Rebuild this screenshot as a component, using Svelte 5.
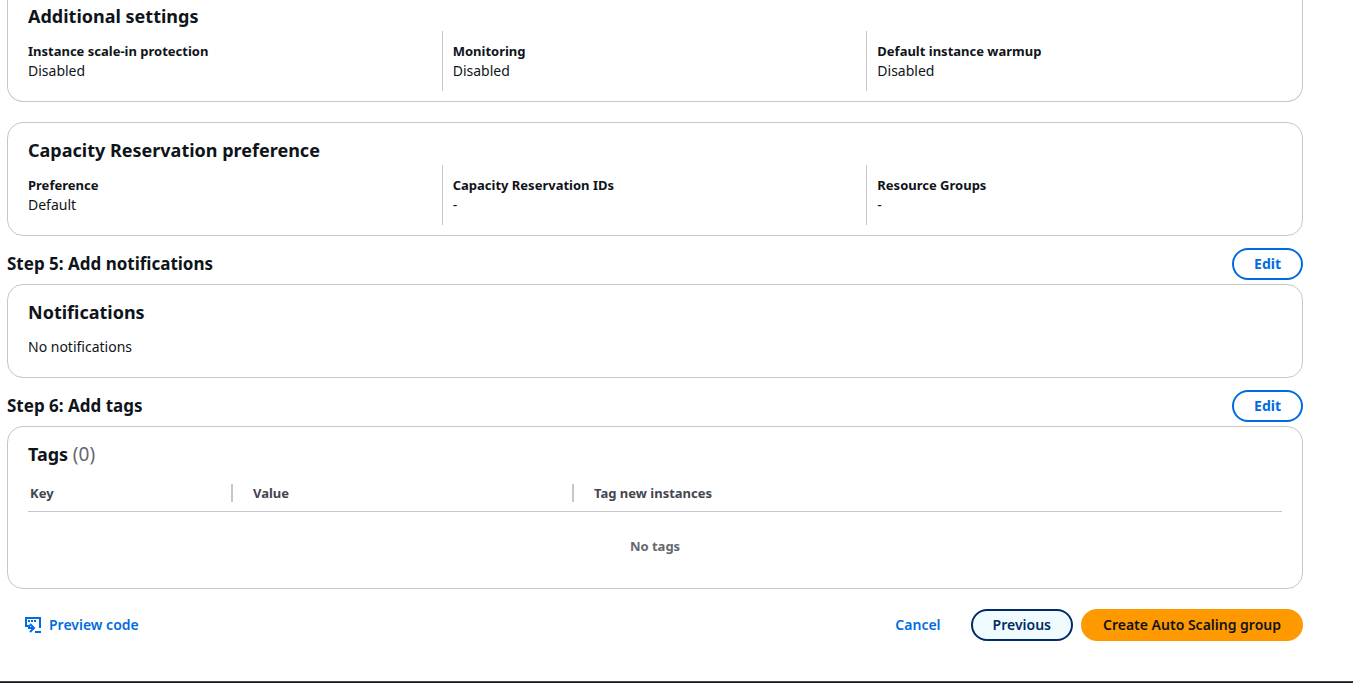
<script>
  const settings = [
    { label: 'Instance scale-in protection', value: 'Disabled' },
    { label: 'Monitoring', value: 'Disabled' },
    { label: 'Default instance warmup', value: 'Disabled' },
  ];
  const capacity = [
    { label: 'Preference', value: 'Default' },
    { label: 'Capacity Reservation IDs', value: '-' },
    { label: 'Resource Groups', value: '-' },
  ];
</script>

{#snippet pairs(items)}
  <dl class="columns">
    {#each items as item}
      <div class="pair">
        <dt>{item.label}</dt>
        <dd>{item.value}</dd>
      </div>
    {/each}
  </dl>
{/snippet}

{#snippet step(title)}
  <header class="step">
    <h2>{title}</h2>
    <button type="button" class="btn edit">Edit</button>
  </header>
{/snippet}

<div class="page">
  <main>
    <section class="card continued">
      <h3>Additional settings</h3>
      {@render pairs(settings)}
    </section>

    <section class="card spaced">
      <h3>Capacity Reservation preference</h3>
      {@render pairs(capacity)}
    </section>

    {@render step('Step 5: Add notifications')}
    <section class="card">
      <h3>Notifications</h3>
      <p class="note">No notifications</p>
    </section>

    {@render step('Step 6: Add tags')}
    <section class="card">
      <h3>Tags <span class="counter">(0)</span></h3>
      <table>
        <colgroup><col class="key" /><col class="value" /><col /></colgroup>
        <thead>
          <tr>
            <th scope="col"><span>Key</span></th>
            <th scope="col"><span>Value</span></th>
            <th scope="col"><span>Tag new instances</span></th>
          </tr>
        </thead>
        <tbody>
          <tr><td colspan="3">No tags</td></tr>
        </tbody>
      </table>
    </section>

    <div class="actions">
      <button type="button" class="btn link preview">
        <svg width="16" height="16" viewBox="0 0 16 16" fill="none" stroke="currentColor" stroke-width="2" aria-hidden="true">
          <path d="M15 11V1H1v8h3v2h4" />
          <path d="M5 7l4 4-4 4" />
          <path d="M10 15h6M3 4h2M6 4h2M9 4h2" />
        </svg>
        Preview code
      </button>
      <div class="right">
        <button type="button" class="btn link">Cancel</button>
        <button type="button" class="btn previous">Previous</button>
        <button type="button" class="btn primary">Create Auto Scaling group</button>
      </div>
    </div>
  </main>
  <div class="bar"></div>
</div>

<style>
  :global(body) {
    margin: 0;
    background: #fff;
  }
  .page {
    box-sizing: border-box;
    min-height: 100vh;
    display: flex;
    flex-direction: column;
    justify-content: space-between;
    font-family: 'Noto Sans', 'Open Sans', sans-serif;
    font-size: 14px;
    line-height: 20px;
    color: #0f141a;
  }
  main {
    padding: 0 50px 0 7px;
  }
  .card {
    border: 1px solid #c6c6cd;
    border-radius: 16px;
    padding: 15px 20px 10px;
  }
  .continued {
    border-top: 0;
    border-radius: 0 0 16px 16px;
    padding-top: 4px;
  }
  .spaced {
    margin-top: 20px;
  }
  h2,
  h3 {
    margin: 0;
    font-size: 17px;
    line-height: 24px;
    font-weight: 700;
  }
  h3 {
    font-size: 18px;
  }
  .counter {
    font-size: 19px;
    font-weight: 400;
    line-height: 20px;
    color: #656871;
  }
  .columns {
    display: grid;
    grid-template-columns: repeat(3, 1fr);
    gap: 20px;
    margin: 3px 0 0;
  }
  .pair {
    padding: 10px 0;
  }
  .pair + .pair {
    margin-left: -11px;
    padding-left: 10px;
    border-left: 1px solid #c6c6cd;
  }
  dt {
    font-size: 13px;
    font-weight: 700;
  }
  dd {
    margin: 0;
  }
  .step {
    display: flex;
    align-items: center;
    justify-content: space-between;
    padding: 12px 0 4px;
  }
  .note {
    margin: 13px 0 10px;
  }
  table {
    width: 100%;
    margin-top: 9px;
    border-collapse: separate;
    border-spacing: 0;
    table-layout: fixed;
    font-size: 13px;
  }
  .key {
    width: 205px;
  }
  .value {
    width: 341px;
  }
  th {
    padding: 9px 0 9px 20px;
    border-bottom: 1px solid #c6c6cd;
    text-align: left;
    line-height: 18px;
    color: #424650;
  }
  th:first-child {
    padding-left: 2px;
  }
  th span {
    display: block;
  }
  th:not(:last-child) span {
    border-right: 2px solid #c6c6cd;
  }
  td {
    padding: 24px 0 22px;
    text-align: center;
    font-weight: 700;
    color: #656871;
  }
  .actions,
  .right {
    display: flex;
    align-items: center;
    justify-content: space-between;
    gap: 8px;
  }
  .actions {
    margin: 20px 0;
  }
  .btn {
    box-sizing: border-box;
    min-height: 32px;
    padding: 4px 20px;
    border: 2px solid #006ce0;
    border-radius: 20px;
    background: #fff;
    color: #006ce0;
    font: inherit;
    font-weight: 600;
    cursor: pointer;
  }
  .edit {
    font-weight: 700;
  }
  .link {
    border-color: transparent;
    background: none;
  }
  .preview {
    display: flex;
    align-items: center;
    gap: 8px;
    padding-left: 16px;
  }
  .previous {
    border-color: #002b66;
    background: #f0fbff;
    color: #002b66;
  }
  .primary {
    border-color: #ff9900;
    background: #ff9900;
    color: #0f141a;
  }
  .bar {
    height: 1px;
    border-top: 1px solid #424650;
    background: #161b2b;
  }
</style>
